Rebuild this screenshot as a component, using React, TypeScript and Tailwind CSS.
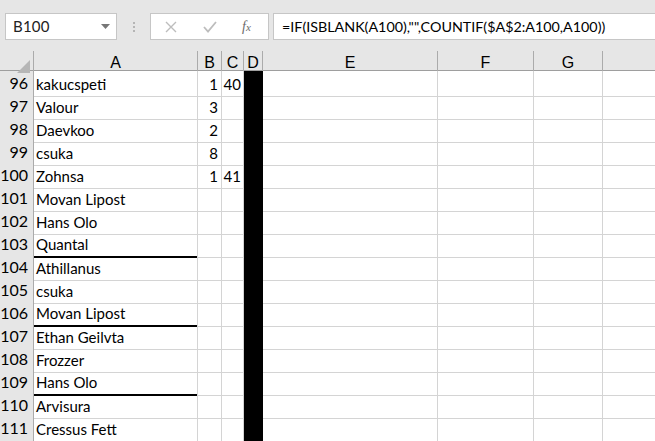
import React from 'react';

const rows: { n: number; a: string; b?: string; c?: string; thick?: boolean }[] = [
  { n: 96, a: 'kakucspeti', b: '1', c: '40' },
  { n: 97, a: 'Valour', b: '3' },
  { n: 98, a: 'Daevkoo', b: '2' },
  { n: 99, a: 'csuka', b: '8' },
  { n: 100, a: 'Zohnsa', b: '1', c: '41' },
  { n: 101, a: 'Movan Lipost' },
  { n: 102, a: 'Hans Olo' },
  { n: 103, a: 'Quantal', thick: true },
  { n: 104, a: 'Athillanus' },
  { n: 105, a: 'csuka' },
  { n: 106, a: 'Movan Lipost', thick: true },
  { n: 107, a: 'Ethan Geilvta' },
  { n: 108, a: 'Frozzer' },
  { n: 109, a: 'Hans Olo', thick: true },
  { n: 110, a: 'Arvisura' },
  { n: 111, a: 'Cressus Fett' },
];

const cols = 'grid grid-cols-[34px_164px_24px_22px_19px_175px_96px_69px_1fr]';
const hdr = 'flex items-center justify-center border-r border-[#ababab] text-[16px] text-black';

export default function App() {
  return (
    <div className="w-[655px] h-[441px] overflow-hidden bg-white font-['Lato','Liberation_Sans',sans-serif]">
      {/* formula bar */}
      <div className="h-[51px] bg-[#e6e6e6] flex items-start pt-[13px] pl-[5px]">
        <div className="w-[112px] h-[27px] bg-white border border-[#c6c6c6] flex items-center justify-between pl-[7px] pr-[6px]">
          <span className="text-[15px] text-[#222] tracking-[0.2px]">B100</span>
          <svg width="9" height="5" viewBox="0 0 9 5"><path d="M0 0h9L4.5 5z" fill="#777" /></svg>
        </div>
        <div className="w-[33px] h-[27px] flex flex-col items-center justify-center gap-[2px]">
          <span className="w-[2px] h-[2px] bg-[#b5b5b5]" />
          <span className="w-[2px] h-[2px] bg-[#b5b5b5]" />
          <span className="w-[2px] h-[2px] bg-[#b5b5b5]" />
        </div>
        <div className="w-[119px] h-[27px] bg-white border border-[#c6c6c6] flex items-center pl-[14px]">
          <svg width="12" height="12" viewBox="0 0 12 12"><path d="M1 1l10 10M11 1L1 11" stroke="#bdbdbd" strokeWidth="1.4" /></svg>
          <svg className="ml-[26px]" width="14" height="12" viewBox="0 0 14 12"><path d="M1 6l4 4.5L13 1" stroke="#bdbdbd" strokeWidth="1.8" fill="none" /></svg>
          <span className="ml-[25px] text-[14px] italic text-[#6b6b6b] font-['Liberation_Serif',serif]">f<span className="text-[11px]">x</span></span>
        </div>
        <div className="ml-[4px] flex-1 h-[27px] bg-white border border-[#c6c6c6] border-r-0 flex items-center pl-[8px]">
          <span className="text-[14.3px] text-black whitespace-nowrap">=IF(ISBLANK(A100),"",COUNTIF($A$2:A100,A100))</span>
        </div>
      </div>

      {/* column header */}
      <div className={`${cols} h-[20px] bg-[#e6e6e6] border-b border-[#9e9e9e] font-['Liberation_Sans',sans-serif]`}>
        <div className="relative border-r border-[#ababab]">
          <svg className="absolute right-[3px] bottom-[2px]" width="13" height="13" viewBox="0 0 13 13"><path d="M13 0v13H0z" fill="#b6b6b6" /></svg>
        </div>
        <div className={hdr}>A</div>
        <div className={hdr}>B</div>
        <div className={hdr}>C</div>
        <div className={hdr}>D</div>
        <div className={hdr}>E</div>
        <div className={hdr}>F</div>
        <div className={hdr}>G</div>
        <div />
      </div>

      {rows.map(r => (
        <div key={r.n} className={`${cols} h-[23px] text-[15px] text-black`}>
          <div className="bg-[#e6e6e6] border-r border-b border-r-[#ababab] border-b-[#c8c8c8] flex items-end justify-end pr-[5px] pb-[1px] text-[16px]">{r.n}</div>
          <div className={`border-r border-r-[#d4d4d4] flex items-end pl-[2px] pb-[1px] ${r.thick ? 'border-b-2 border-b-black' : 'border-b border-b-[#d4d4d4]'}`}>{r.a}</div>
          <div className="border-r border-b border-[#d4d4d4] flex items-end justify-end pr-[3px] pb-[1px]">{r.b}</div>
          <div className="border-r border-b border-[#d4d4d4] flex items-end justify-end pr-[2px] pb-[1px]">{r.c}</div>
          <div className="bg-black" />
          <div className="border-r border-b border-[#d4d4d4]" />
          <div className="border-r border-b border-[#d4d4d4]" />
          <div className="border-r border-b border-[#d4d4d4]" />
          <div className="border-b border-[#d4d4d4]" />
        </div>
      ))}
      {/* partial row 112 */}
      <div className={`${cols} h-[23px]`}>
        <div className="bg-[#e6e6e6] border-r border-[#ababab]" />
        <div className="border-r border-[#d4d4d4]" />
        <div className="border-r border-[#d4d4d4]" />
        <div className="border-r border-[#d4d4d4]" />
        <div className="bg-black" />
        <div className="border-r border-[#d4d4d4]" />
        <div className="border-r border-[#d4d4d4]" />
        <div className="border-r border-[#d4d4d4]" />
        <div />
      </div>
    </div>
  );
}
